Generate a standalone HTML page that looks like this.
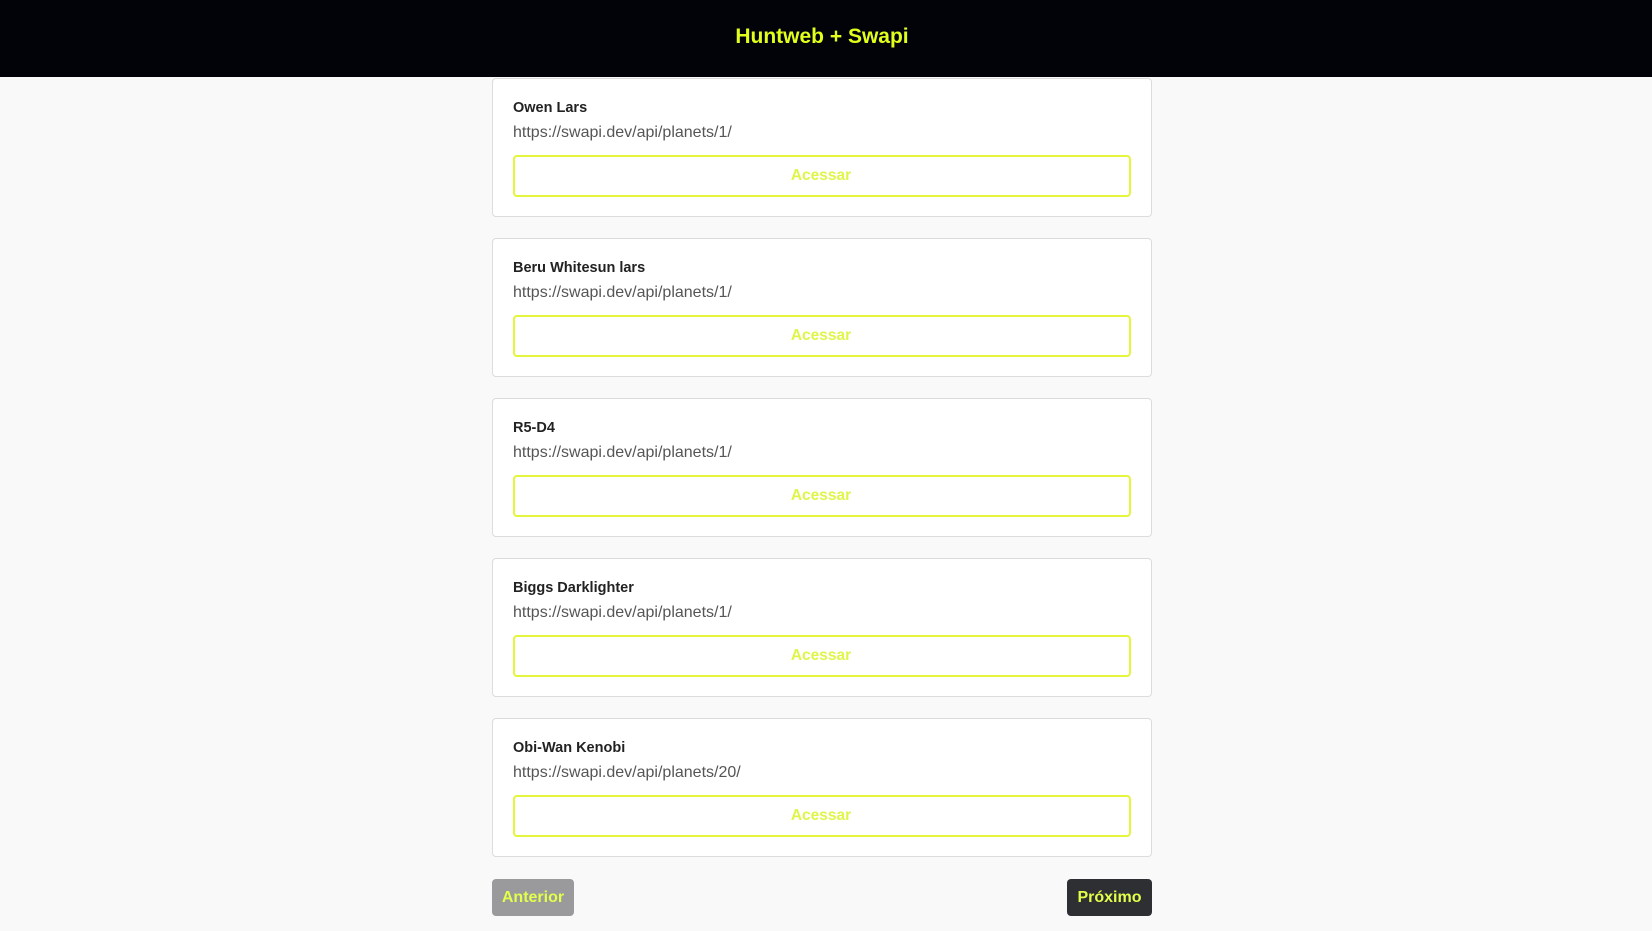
<!DOCTYPE html>
<html><head><meta charset="utf-8"><style>
*{box-sizing:border-box;margin:0;padding:0}
body{width:1652px;height:931px;background:#f9f9f9;font-family:"Liberation Sans",Arial,sans-serif;overflow:hidden;position:relative}
header{position:absolute;left:0;top:0;width:1652px;height:77px;background:#020308;color:#e2ff1c;font-weight:bold;font-size:21px;text-align:center;line-height:74px;padding-right:8px}
.card{position:absolute;left:492px;width:660px;height:139px;background:#fff;border:1px solid #dcdcdc;border-radius:4px}
.name{position:absolute;left:20px;top:21px;font-size:14.5px;font-weight:bold;color:#222}
.url{position:absolute;left:20px;top:45px;font-size:16px;color:#555}
.btn{position:absolute;left:20px;top:76px;width:618px;height:42px;border:2.5px solid #e4f53c;border-radius:4px;text-align:center;line-height:37px;color:#e0f54a;font-weight:bold;font-size:15.5px;padding-right:2px}
.nav{position:absolute;top:879px;height:37px;border-radius:4px;font-weight:bold;font-size:16px;color:#e2ff4a;line-height:37px;text-align:center}
</style></head><body>
<header>Huntweb + Swapi</header>
<div class="card" style="top:78px"><div class="name">Owen Lars</div><div class="url">https://swapi.dev/api/planets/1/</div><div class="btn">Acessar</div></div>
<div class="card" style="top:238px"><div class="name">Beru Whitesun lars</div><div class="url">https://swapi.dev/api/planets/1/</div><div class="btn">Acessar</div></div>
<div class="card" style="top:398px"><div class="name">R5-D4</div><div class="url">https://swapi.dev/api/planets/1/</div><div class="btn">Acessar</div></div>
<div class="card" style="top:558px"><div class="name">Biggs Darklighter</div><div class="url">https://swapi.dev/api/planets/1/</div><div class="btn">Acessar</div></div>
<div class="card" style="top:718px"><div class="name">Obi-Wan Kenobi</div><div class="url">https://swapi.dev/api/planets/20/</div><div class="btn">Acessar</div></div>
<div class="nav" style="left:492px;width:82px;background:#9a9a9c">Anterior</div>
<div class="nav" style="left:1067px;width:85px;background:#2e2f33">Próximo</div>
</body></html>
